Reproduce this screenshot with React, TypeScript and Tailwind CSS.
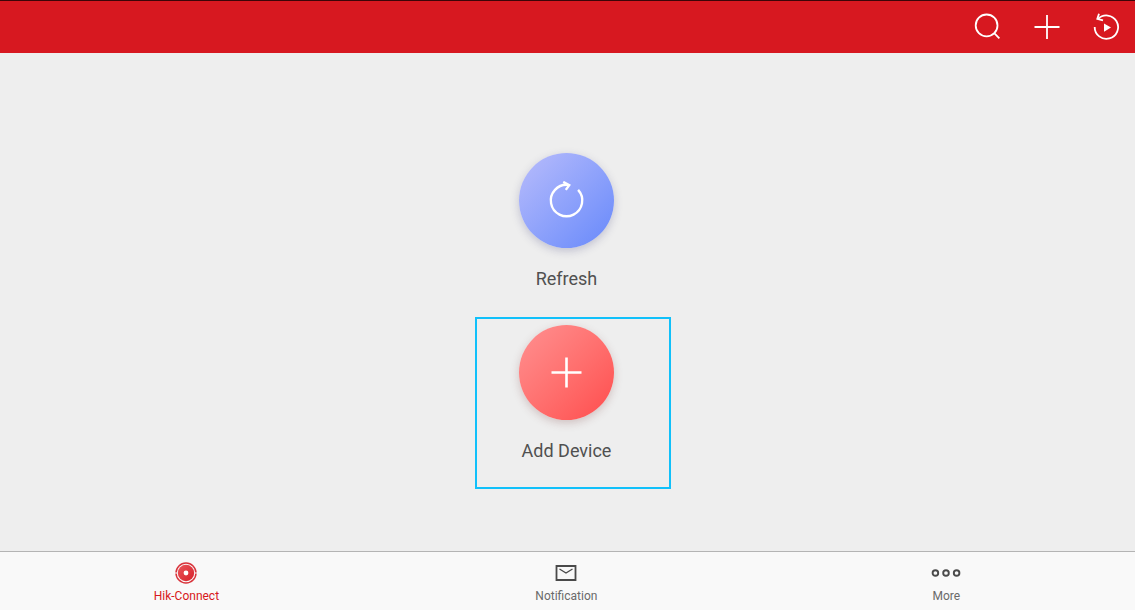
import type { ReactNode } from 'react';

const RefreshIcon = () => (
  <svg className="w-[39px] h-[39px]" viewBox="0 0 39 39" fill="none" stroke="currentColor" strokeWidth="2.4">
    <path d="M31.1 8.9A15.7 15.7 0 1 1 21.1 3.9" />
    <path d="M16.2 0.9L22.2 4.1L18.8 8.9" />
  </svg>
);

const AddIcon = () => (
  <svg className="w-[39px] h-[39px]" viewBox="0 0 39 39" fill="none" stroke="currentColor" strokeWidth="2.6">
    <path d="M19.5 4.5v30M4.5 19.5h30" />
  </svg>
);

const HomeIcon = () => (
  <svg className="w-6 h-6" viewBox="0 0 24 24">
    <defs>
      <linearGradient id="lens" x1="0" y1="0" x2="1" y2="1">
        <stop offset="0" stopColor="#e8565b" />
        <stop offset="1" stopColor="#d8202a" />
      </linearGradient>
    </defs>
    <circle cx="12" cy="12" r="10" fill="none" stroke="#d9343c" strokeWidth="1.5" />
    <path d="M0.5 12h3M20.5 12h3" stroke="#f9f9f9" strokeWidth="1.2" />
    <circle cx="12" cy="12" r="8.2" fill="url(#lens)" />
    <circle cx="12" cy="12" r="2.4" fill="#fff" />
  </svg>
);

const MailIcon = () => (
  <svg className="w-6 h-6" viewBox="0 0 24 24" fill="none" stroke="#4a4a4a">
    <path d="M2.5 5h19v14h-19z" strokeWidth="1.8" />
    <path d="M5.5 8l6.5 4l6.5-4" strokeWidth="1.3" />
  </svg>
);

const MoreIcon = () => (
  <svg className="w-8 h-6" viewBox="0 0 32 24" fill="none" stroke="#4a4a4a" strokeWidth="1.9">
    <circle cx="5.4" cy="12" r="2.8" />
    <circle cx="16" cy="12" r="2.8" />
    <circle cx="26.6" cy="12" r="2.8" />
  </svg>
);

const tabs = [
  { label: 'Hik-Connect', icon: <HomeIcon />, active: true },
  { label: 'Notification', icon: <MailIcon />, active: false },
  { label: 'More', icon: <MoreIcon />, active: false },
];

function HeaderButton({ label, children }: { label: string; children: ReactNode }) {
  return (
    <button type="button" aria-label={label} className="w-7 h-7">
      <svg className="w-7 h-7" viewBox="0 0 28 28" fill="none" stroke="currentColor" strokeWidth="1.8">
        {children}
      </svg>
    </button>
  );
}

function Action({ label, color, children }: { label: string; color: string; children: ReactNode }) {
  return (
    <button type="button" className="flex flex-col items-center">
      <span className={`flex items-center justify-center w-[95px] h-[95px] rounded-full text-white ${color}`}>
        {children}
      </span>
      <span className="mt-[19px] text-lg leading-6 text-[#505050]">{label}</span>
    </button>
  );
}

export default function App() {
  return (
    <div className="flex flex-col min-h-screen bg-[#eeeeee] font-['Roboto',sans-serif]">
      <header className="flex items-center justify-end gap-8 h-[53px] pr-[15px] border-t border-[#3c0508] bg-[#d71820] text-white">
        <HeaderButton label="Search">
          <circle cx="14.6" cy="12.4" r="10.9" />
          <path d="M22.2 20.2L27.4 25.4" />
        </HeaderButton>
        <HeaderButton label="Add">
          <path d="M15 2v24M2.5 14h25" />
        </HeaderButton>
        <HeaderButton label="Playback">
          <path d="M2.7 14A11.7 11.7 0 1 0 6 6" />
          <path d="M7 0.8L5.3 5.8L11 7.4" />
          <path d="M12 10.4L19 14.6L12 18.8z" fill="currentColor" stroke="none" />
        </HeaderButton>
      </header>

      <main className="flex flex-1 flex-col items-center justify-center gap-[34px] pt-3 pr-[2px]">
        <Action
          label="Refresh"
          color="bg-linear-to-br from-[#b9bcfb] to-[#6788fa] shadow-[0_3px_8px_rgba(60,60,120,0.25)]"
        >
          <RefreshIcon />
        </Action>
        <div className="relative">
          <Action
            label="Add Device"
            color="bg-linear-to-br from-[#ff9091] to-[#ff4a4c] shadow-[0_3px_8px_rgba(120,60,60,0.25)]"
          >
            <AddIcon />
          </Action>
          {/* highlight frame */}
          <div className="absolute -top-2 -bottom-[26px] -left-11 -right-[57px] border-2 border-[#10c0fa] pointer-events-none" />
        </div>
      </main>

      <nav className="flex justify-between h-[59px] pl-[12.9%] pr-[13.1%] border-t border-[#b4b4b4] bg-[#f9f9f9]">
        {tabs.map((tab) => (
          <a
            key={tab.label}
            href="#"
            className={`flex flex-col items-center w-20 pt-[9px] text-xs ${tab.active ? 'text-[#d71820]' : 'text-[#6a6a6a]'}`}
          >
            {tab.icon}
            <span className="mt-[3px]">{tab.label}</span>
          </a>
        ))}
      </nav>
    </div>
  );
}
